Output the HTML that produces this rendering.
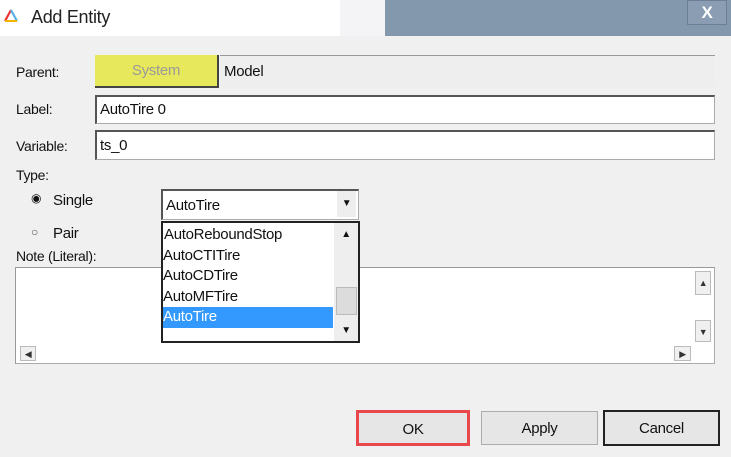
<!DOCTYPE html>
<html><head><style>
body{margin:0;width:731px;height:457px;overflow:hidden;background:#f0f0f0;font-family:"Liberation Sans",sans-serif;font-size:14px;color:#111;position:relative;letter-spacing:-0.3px}
.a{position:absolute}
.in{background:#fff;border:1px solid #aaa;border-top:2px solid #555;border-left:2px solid #555;box-sizing:border-box}
.btn{position:absolute;background:#e6e6e6;border:1px solid #adadad;box-sizing:border-box;text-align:center;font-size:15px}
.sb{position:absolute;background:#f0f0f0;border:1px solid #bbb;box-sizing:border-box;font-size:9px;text-align:center;color:#333}
</style></head><body>
<div class="a" style="left:0;top:0;width:385px;height:36px;background:#fff"></div>
<div class="a" style="left:385px;top:0;width:346px;height:36px;background:#8397ad"></div>
<div class="a" style="left:340px;top:0;width:45px;height:36px;background:#f4f4f6"></div>
<div class="a" style="left:687px;top:0;width:40px;height:25px;background:#8a9db3;border:1px solid #6d7f94;box-sizing:border-box;color:#fff;font-size:17px;font-weight:bold;text-align:center;line-height:23px">X</div>
<svg class="a" style="left:3px;top:8px" width="16" height="16"><path d="M8 2 L2 13" stroke="#e33" stroke-width="2.2"/><path d="M8 2 L14 13" stroke="#5ab0e8" stroke-width="2.2"/><path d="M2 13 L14 13" stroke="#f4b400" stroke-width="2"/></svg>
<div class="a" style="left:31px;top:7px;font-size:18px;color:#222">Add Entity</div>
<div class="a" style="left:16px;top:64px;font-size:14px">Parent:</div>
<div class="a" style="left:95px;top:55px;width:124px;height:33px;background:#e8e85c;border-bottom:2px solid #444;border-right:2px solid #444;box-sizing:border-box;text-align:center;line-height:32px;color:#999;font-size:15px">System</div>
<div class="a" style="left:220px;top:55px;width:495px;height:32px;background:#eee;border-top:1px solid #999;box-sizing:border-box;line-height:32px;padding-left:4px;font-size:15px">Model</div>
<div class="a" style="left:16px;top:101px">Label:</div>
<div class="a in" style="left:95px;top:95px;width:620px;height:29px;line-height:26px;padding-left:3px;font-size:15px">AutoTire 0</div>
<div class="a" style="left:16px;top:138px">Variable:</div>
<div class="a in" style="left:95px;top:130px;width:620px;height:30px;line-height:27px;padding-left:3px;font-size:15px">ts_0</div>
<div class="a" style="left:16px;top:167px">Type:</div>
<div class="a" style="left:31px;top:191px;font-size:12px">◉</div>
<div class="a" style="left:53px;top:192px;font-size:15px">Single</div>
<div class="a" style="left:31px;top:225px;font-size:12px;color:#555">○</div>
<div class="a" style="left:53px;top:225px;font-size:15px">Pair</div>
<div class="a" style="left:16px;top:248px">Note (Literal):</div>
<div class="a in" style="left:15px;top:267px;width:700px;height:97px;border-top:1px solid #999;border-left:1px solid #999"></div>
<div class="sb" style="left:695px;top:271px;width:16px;height:24px;line-height:22px">▲</div>
<div class="sb" style="left:695px;top:320px;width:16px;height:22px;line-height:22px">▼</div>
<div class="sb" style="left:20px;top:346px;width:16px;height:15px;line-height:14px">◀</div>
<div class="sb" style="left:674px;top:346px;width:17px;height:15px;line-height:14px">▶</div>
<div class="a in" style="left:161px;top:189px;width:198px;height:31px;line-height:30px;padding-left:3px;font-size:15px">AutoTire</div>
<div class="a" style="left:337px;top:191px;width:19px;height:26px;background:#eee;text-align:center;line-height:26px;font-size:10px">▼</div>
<div class="a" style="left:161px;top:221px;width:199px;height:122px;background:#fff;border:2px solid #222;box-sizing:border-box;font-size:15px;line-height:20.5px;padding-top:2px">
<div style="padding-left:1px">AutoReboundStop</div><div>AutoCTITire</div><div>AutoCDTire</div><div>AutoMFTire</div><div style="background:#3399ff;color:#fff;width:170px">AutoTire</div></div>
<div class="a" style="left:334px;top:223px;width:24px;height:118px;background:#eee"></div>
<div class="a" style="left:334px;top:223px;width:24px;height:23px;text-align:center;line-height:23px;font-size:10px">▲</div>
<div class="a" style="left:336px;top:287px;width:21px;height:28px;background:#dcdcdc;border:1px solid #bbb;box-sizing:border-box"></div>
<div class="a" style="left:334px;top:320px;width:24px;height:21px;text-align:center;line-height:21px;font-size:10px">▼</div>
<div class="btn" style="left:356px;top:410px;width:114px;height:36px;line-height:33px;border:3px solid #e8484b">OK</div>
<div class="btn" style="left:481px;top:411px;width:117px;height:34px;line-height:33px">Apply</div>
<div class="btn" style="left:603px;top:410px;width:117px;height:36px;line-height:34px;border:2px solid #222">Cancel</div>
</body></html>
